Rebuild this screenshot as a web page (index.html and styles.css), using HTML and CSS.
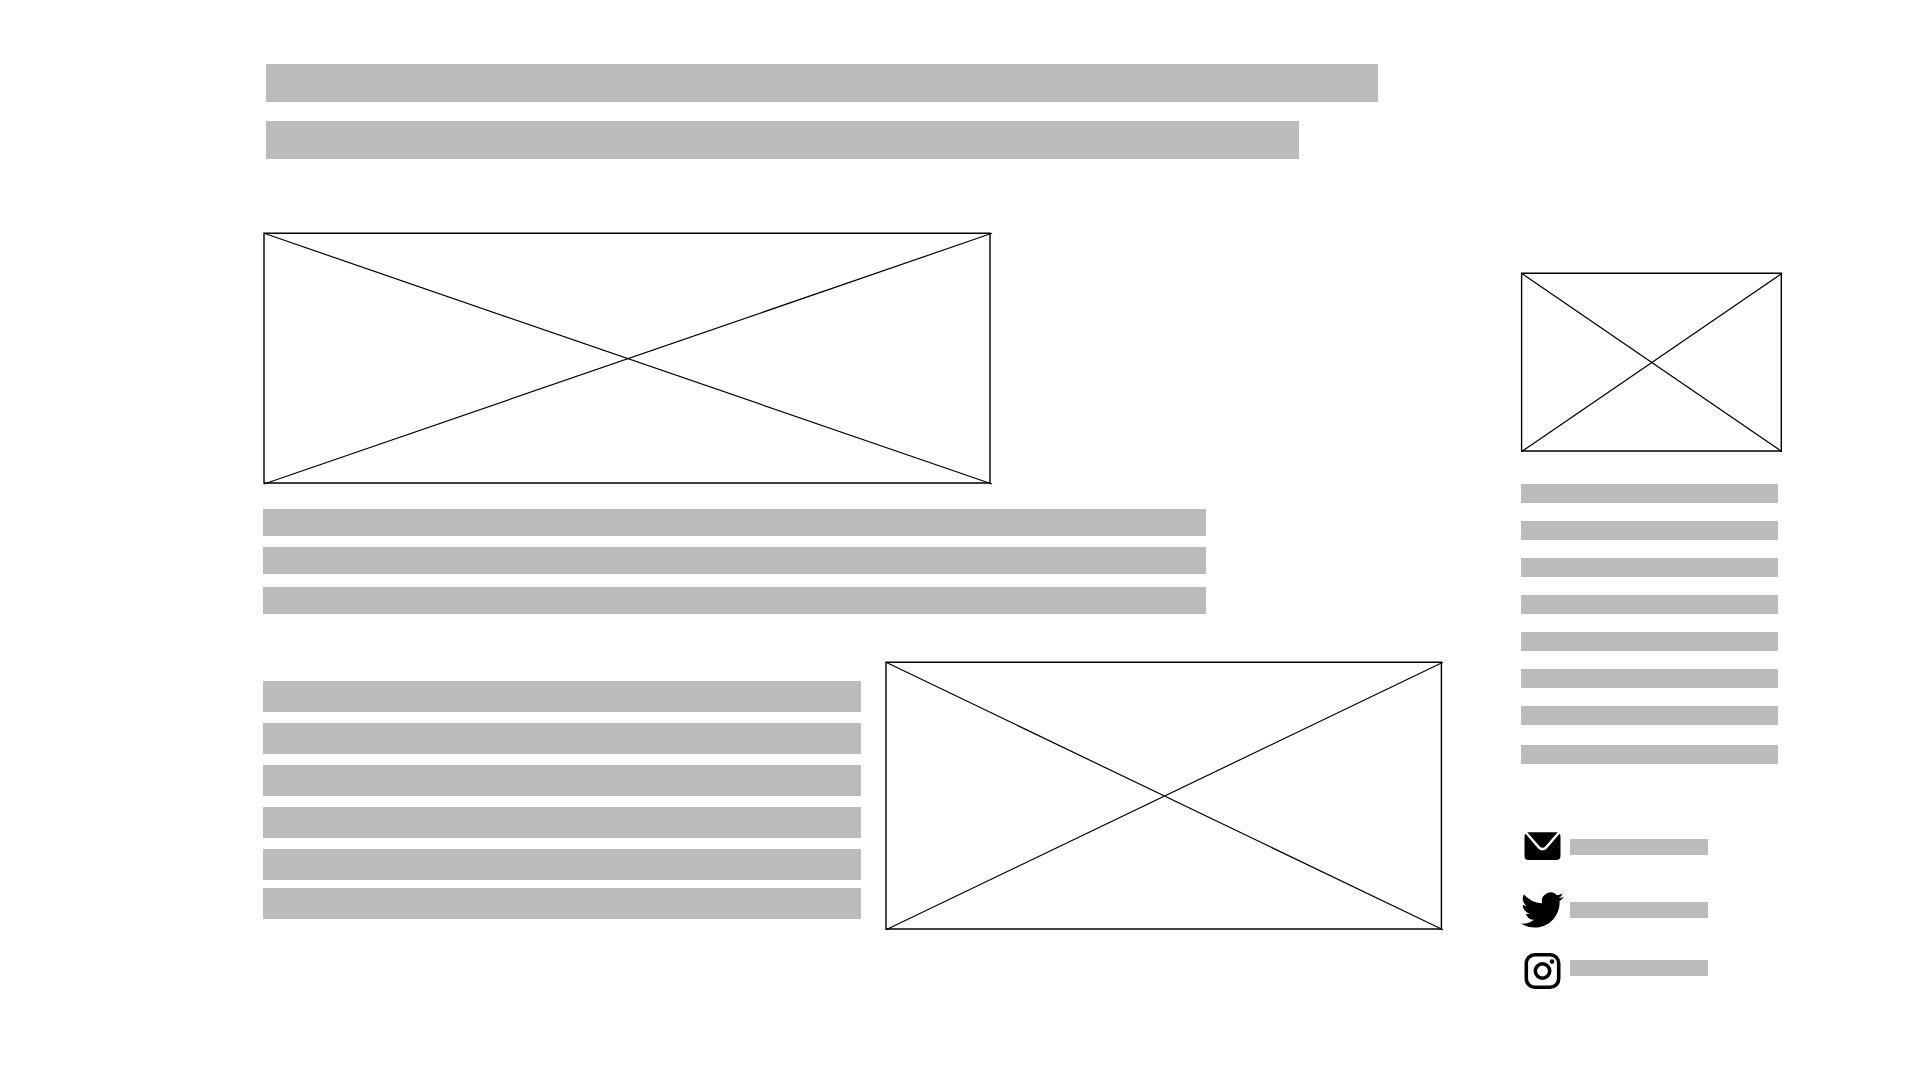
FILE: index.html
```html
<!DOCTYPE html>
<html lang="en">
<head>
<meta charset="utf-8">
<meta name="viewport" content="width=device-width, initial-scale=1">
<link rel="stylesheet" href="styles.css">
</head>
<body>
<div class="page">
  <main class="content">
    <header class="heading">
      <div class="bar bar-title"></div>
      <div class="bar bar-subtitle"></div>
    </header>
    <svg class="placeholder hero" viewBox="0 0 729 253" aria-hidden="true">
      <path class="frame" d="M1 1.3H727V251H1Z"/>
      <path d="M1 1.3L729 252M1 252L729 1.3"/>
    </svg>
    <div class="intro">
      <div class="stack">
        <div class="bar bar-intro"></div>
        <div class="bar bar-intro"></div>
      </div>
      <div class="bar bar-intro"></div>
    </div>
    <section class="feature">
      <div class="feature-text">
        <div class="stack">
          <div class="bar bar-body"></div>
          <div class="bar bar-body"></div>
          <div class="bar bar-body"></div>
          <div class="bar bar-body"></div>
          <div class="bar bar-body"></div>
        </div>
        <div class="bar bar-body"></div>
      </div>
      <svg class="placeholder feature-image" viewBox="0 0 558 269" aria-hidden="true">
        <path class="frame" d="M1 1.3H556.4V268H1Z"/>
        <path d="M1 1.3L558 268.8M1 268.8L558 1.3"/>
      </svg>
    </section>
  </main>
  <aside class="sidebar">
    <svg class="placeholder portrait" viewBox="0 0 262 180" aria-hidden="true">
      <path class="frame" d="M.6 1.3H260.3V179H.6Z"/>
      <path d="M.6 1.3L261 179.6M.6 179.6L261 1.3"/>
    </svg>
    <div class="bio">
      <div class="bio-stack">
        <div class="bar bar-bio"></div>
        <div class="bar bar-bio"></div>
        <div class="bar bar-bio"></div>
        <div class="bar bar-bio"></div>
        <div class="bar bar-bio"></div>
        <div class="bar bar-bio"></div>
        <div class="bar bar-bio"></div>
      </div>
      <div class="bar bar-bio"></div>
    </div>
    <ul class="contacts">
      <li class="contact contact-mail">
        <svg class="icon" width="43" height="28" viewBox="0.5 0 43 28" aria-hidden="true">
          <path d="M6.8 .2H37.2L25 14.2Q22 17.4 19 14.2ZM5 1.8Q4 2.8 4 4.5V24Q4 28 8 28H36Q40 28 40 24V4.5Q40 2.8 39 1.8L26.8 16Q22 21 17.2 16Z"/>
        </svg>
        <div class="bar bar-contact"></div>
      </li>
      <li class="contact contact-twitter">
        <svg class="icon" width="43" height="36" viewBox="0 2.2 24 19.6" aria-hidden="true">
          <path d="M23.953 4.57a10 10 0 01-2.825.775 4.958 4.958 0 002.163-2.723c-.951.555-2.005.959-3.127 1.184a4.92 4.92 0 00-8.384 4.482C7.69 8.095 4.067 6.13 1.64 3.162a4.822 4.822 0 00-.666 2.475c0 1.71.87 3.213 2.188 4.096a4.904 4.904 0 01-2.228-.616v.06a4.923 4.923 0 003.946 4.827 4.996 4.996 0 01-2.212.085 4.936 4.936 0 004.604 3.417 9.867 9.867 0 01-6.102 2.105c-.39 0-.779-.023-1.17-.067a13.995 13.995 0 007.557 2.209c9.053 0 13.998-7.496 13.998-13.985 0-.21 0-.42-.015-.63A9.935 9.935 0 0024 4.59z"/>
        </svg>
        <div class="bar bar-contact"></div>
      </li>
      <li class="contact contact-instagram">
        <svg class="icon" width="43" height="36" viewBox="0.5 0 43 36" aria-hidden="true">
          <rect class="line" x="5.8" y="1.8" width="32.4" height="32.4" rx="8.500"/>
          <circle class="line" cx="22" cy="18" r="7.2"/>
          <circle cx="31.5" cy="8.6" r="2.3"/>
        </svg>
        <div class="bar bar-contact"></div>
      </li>
    </ul>
  </aside>
</div>
</body>
</html>
```
FILE: styles.css
```css
* { box-sizing: border-box; }

body {
  margin: 0;
  background: #fff;
}

.page {
  display: grid;
  grid-template-columns: 1180fr 262fr;
  column-gap: calc(100% * 78 / 1520);
  padding: 64px calc(100% * 137 / 1920) 64px calc(100% * 263 / 1920);
}

.bar { background: #bbb; }

.placeholder {
  display: block;
  height: auto;
  overflow: visible;
  fill: none;
  stroke: #000;
  stroke-width: 1.2;
}
.frame { stroke-width: 1.4; }

.heading {
  display: grid;
  gap: 19px;
  padding-left: 3px;
}
.bar-title, .bar-subtitle { height: 38px; }
.bar-title { width: calc(100% * 1112 / 1177); }
.bar-subtitle { width: calc(100% * 1033 / 1177); }

.hero {
  width: calc(100% * 729 / 1180);
  margin-top: 73px;
}

.intro {
  display: grid;
  gap: 13px;
  width: calc(100% * 943 / 1180);
  margin-top: 24px;
}
.stack {
  display: grid;
  gap: 11px;
}
.bar-intro { height: 27px; }

.feature {
  display: grid;
  grid-template-columns: 598fr 558fr;
  column-gap: 24px;
  margin-top: 47px;
}
.feature-text {
  display: grid;
  align-content: start;
  gap: 8px;
  padding-top: 20px;
}
.bar-body { height: 31px; }
.feature-image { width: 100%; }

.sidebar { padding-top: 208px; }
.portrait { width: 100%; }

.bio {
  display: grid;
  gap: 20px;
  width: calc(100% * 257 / 262);
  margin-top: 32px;
}
.bio-stack {
  display: grid;
  gap: 18px;
}
.bar-bio { height: 19px; }

.contacts {
  margin: 68px 0 0;
  padding: 0;
  list-style: none;
}
.contact {
  display: flex;
  gap: 6px;
}
.contact-mail, .contact-instagram {
  align-items: flex-start;
}
.contact-mail .bar-contact, .contact-instagram .bar-contact { margin-top: 7px; }
.contact-twitter {
  align-items: center;
  margin: 32px 0 25px;
}
.icon { flex: none; }
.line {
  fill: none;
  stroke: #000;
  stroke-width: 3.6;
}
.bar-contact {
  width: calc(100% * 138 / 262);
  height: 16px;
}
```
